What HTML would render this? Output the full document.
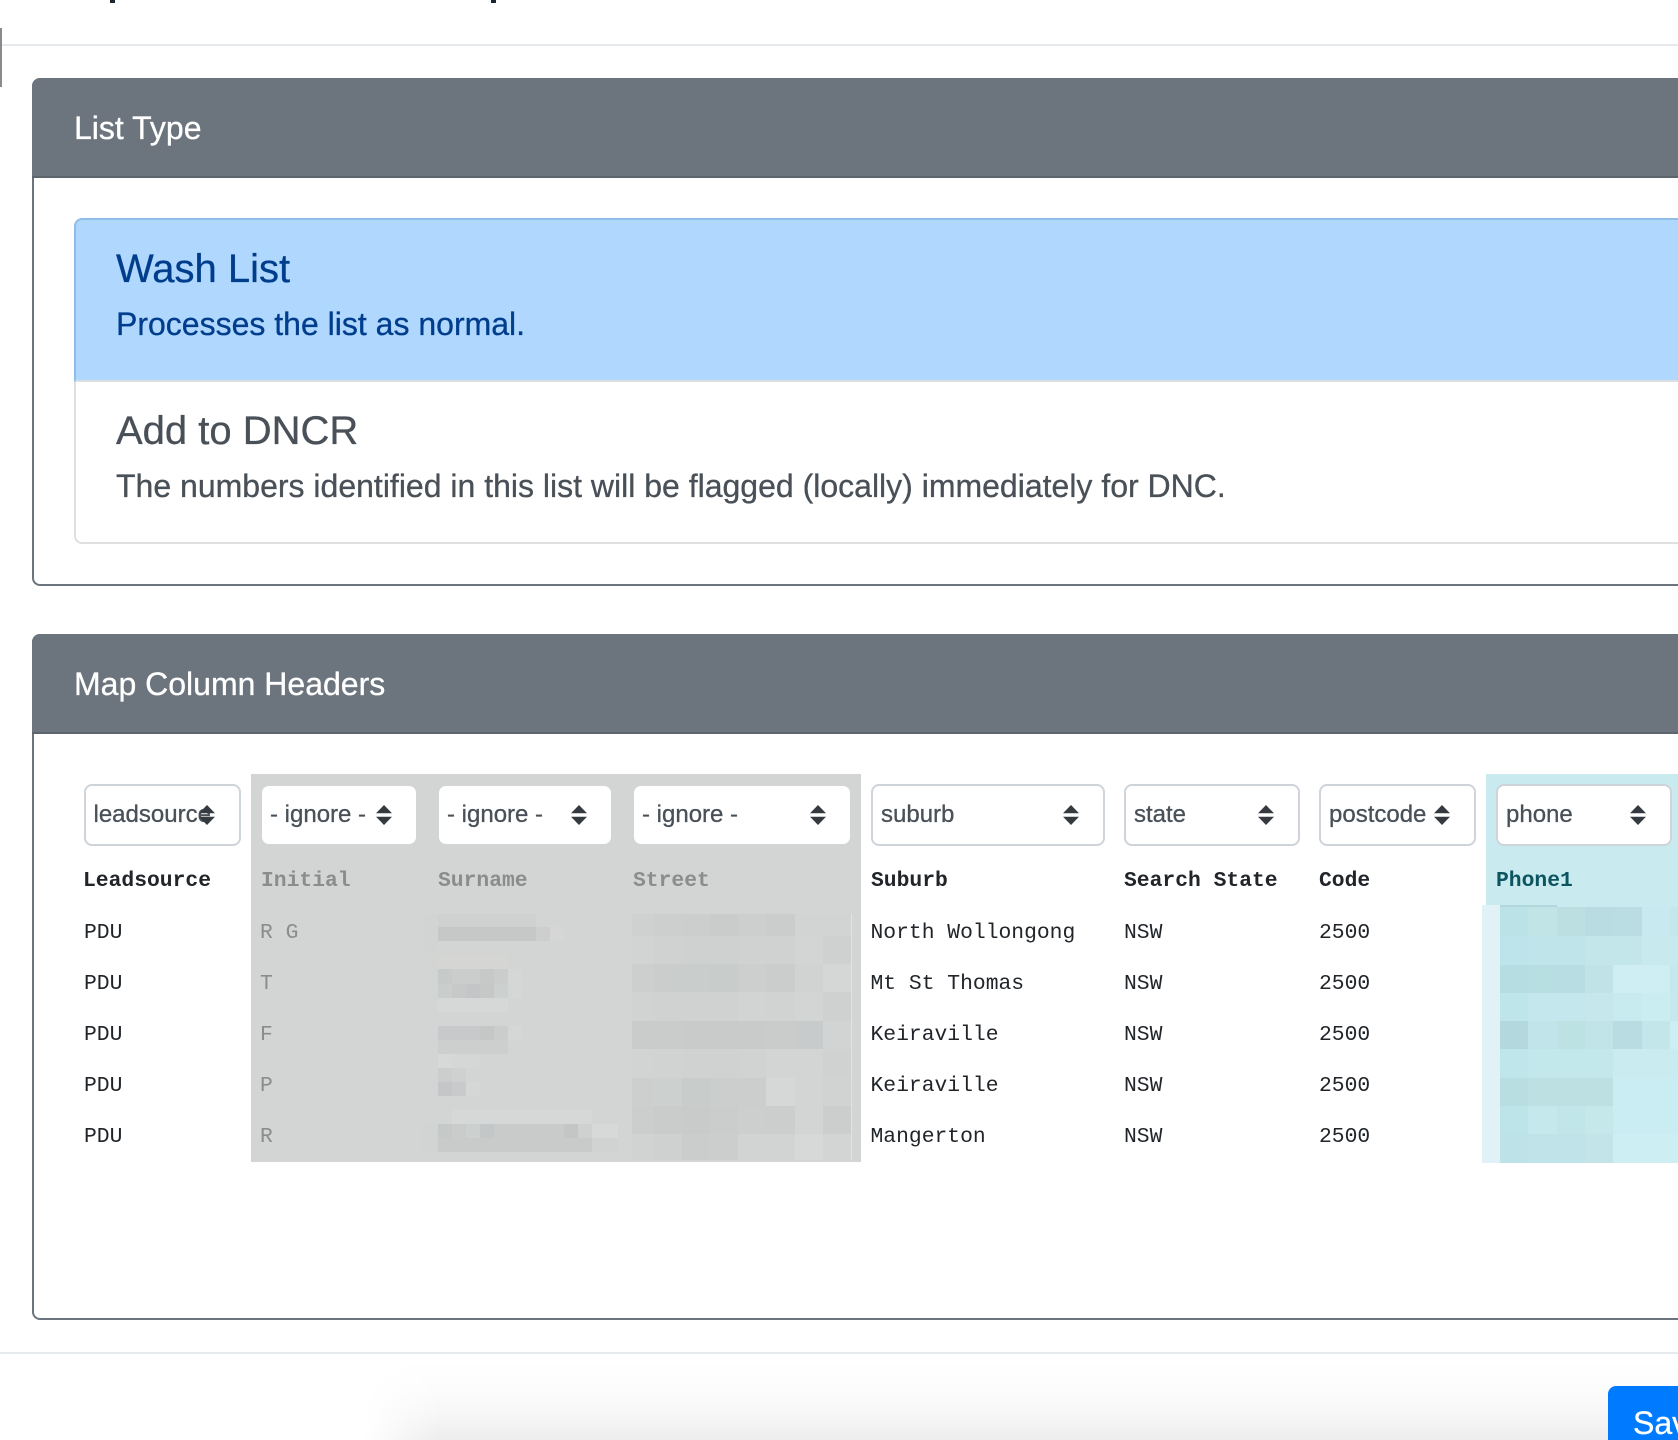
<!DOCTYPE html>
<html><head><meta charset="utf-8"><title>Map Column Headers</title>
<style>
html,body{margin:0;padding:0;width:1678px;height:1440px;overflow:hidden;background:#fff}
#p{position:relative;width:1678px;height:1440px;overflow:hidden;background:#fff}
#p div,#p span,#p svg{position:absolute}
.t{line-height:0;white-space:pre;font-family:"Liberation Sans",sans-serif;-webkit-text-stroke:.3px currentColor}
.card{left:32px;width:1646px;box-sizing:border-box;border:2px solid #6c757d;border-right:0;border-radius:8px 0 0 8px;background:#fff}
.head{background:#6c757d;left:32px;width:1646px;border-radius:8px 0 0 0;border-bottom:2px solid #5d656c;box-sizing:border-box}
.h{font-size:32px;color:#fff;left:74px}
.sel{box-sizing:border-box;background:#fff;border:2px solid #ced4da;border-radius:8px;top:784px;height:62px}
.sel.g{border:0;top:786px;height:58px;border-radius:7px}
.st{font-size:24px;color:#495057;top:815.4px}
.m{font-family:"Liberation Mono",monospace;font-size:21.33px;color:#212529;-webkit-text-stroke:0}
.b{font-weight:bold}
.gr{color:#8b8c8d}
.ar{top:805px;width:16px;height:20px}
</style></head><body><div id="p">

<div style="left:110px;top:0;width:5px;height:3px;background:#1c2530"></div>
<div style="left:491px;top:0;width:5px;height:3px;background:#1c2530"></div>
<div style="left:0;top:44px;width:1678px;height:2px;background:#e7eaed"></div>
<div style="left:0;top:28px;width:2px;height:59px;background:#8a8a8a"></div>

<!-- Card 1 -->
<div class="card" style="top:78px;height:508px"></div>
<div class="head" style="top:78px;height:100px"></div>
<div class="t h" style="top:127.9px">List Type</div>
<div style="left:74px;top:218px;width:1604px;height:164px;box-sizing:border-box;background:#b0d8fe;border:2px solid #8fbde9;border-right:0;border-bottom:2px solid #dcdfe2;border-radius:8px 0 0 0"></div>
<div style="left:74px;top:382px;width:1604px;height:162px;box-sizing:border-box;background:#fff;border:2px solid #dfdfdf;border-top:0;border-right:0;border-radius:0 0 0 8px"></div>
<div class="t" style="left:116px;top:268.8px;font-size:40px;color:#003d8c">Wash List</div>
<div class="t" style="left:116px;top:323.9px;font-size:32px;color:#003d8c">Processes the list as normal.</div>
<div class="t" style="left:116px;top:431.1px;font-size:40px;color:#495057">Add to DNCR</div>
<div class="t" style="left:116px;top:485.9px;font-size:32px;color:#495057">The numbers identified in this list will be flagged (locally) immediately for DNC.</div>

<!-- Card 2 -->
<div class="card" style="top:634px;height:686px"></div>
<div class="head" style="top:634px;height:100px"></div>
<div class="t h" style="top:683.9px">Map Column Headers</div>

<div style="left:251px;top:774px;width:610px;height:388px;background:#d3d4d4"></div>
<div style="left:1486px;top:774px;width:192px;height:131px;background:#c9ebef"></div>

<svg style="left:0;top:0" width="1678" height="1440" viewBox="0 0 1678 1440">
<!-- surname -->
<rect x="424" y="914" width="14" height="38" fill="#d2d3d2"/>
<rect x="438" y="914" width="98" height="13" fill="#cfd0d0"/>
<rect x="438" y="927" width="98" height="14" fill="#c6c8c8"/>
<rect x="536" y="927" width="14" height="14" fill="#cdcece"/>
<rect x="550" y="927" width="14" height="14" fill="#d6d6d6"/>
<rect x="438" y="954" width="70" height="15" fill="#d5d5d3"/>
<rect x="438" y="969" width="14" height="15" fill="#c6cac9"/>
<rect x="452" y="969" width="28" height="15" fill="#cacdcc"/>
<rect x="480" y="969" width="14" height="15" fill="#c6c9c8"/>
<rect x="494" y="969" width="14" height="15" fill="#cbcccc"/>
<rect x="508" y="969" width="14" height="29" fill="#d5d6d6"/>
<rect x="438" y="984" width="14" height="14" fill="#c9cdcc"/>
<rect x="452" y="984" width="14" height="14" fill="#c7c8c8"/>
<rect x="466" y="984" width="14" height="14" fill="#c4c5c6"/>
<rect x="480" y="984" width="14" height="14" fill="#c6c7c7"/>
<rect x="494" y="984" width="14" height="14" fill="#ccd0ce"/>
<rect x="438" y="998" width="70" height="14" fill="#d6d7d7"/>
<rect x="438" y="1026" width="42" height="14" fill="#c8c9ca"/>
<rect x="480" y="1026" width="14" height="14" fill="#c5c6c6"/>
<rect x="494" y="1026" width="14" height="14" fill="#cbcccc"/>
<rect x="508" y="1026" width="14" height="14" fill="#d5d6d6"/>
<rect x="438" y="1040" width="70" height="14" fill="#cdcece"/>
<rect x="438" y="1054" width="14" height="14" fill="#d7d8d8"/>
<rect x="452" y="1054" width="28" height="14" fill="#d5d6d6"/>
<rect x="438" y="1068" width="14" height="14" fill="#cccdcd"/>
<rect x="452" y="1068" width="14" height="14" fill="#cfd1d0"/>
<rect x="438" y="1082" width="14" height="14" fill="#c5c6c7"/>
<rect x="452" y="1082" width="14" height="14" fill="#c9cacc"/>
<rect x="466" y="1082" width="14" height="14" fill="#d5d6d6"/>
<rect x="452" y="1110" width="140" height="14" fill="#d6d7d7"/>
<rect x="438" y="1124" width="14" height="14" fill="#c5c9c8"/>
<rect x="452" y="1124" width="14" height="14" fill="#c9cccb"/>
<rect x="466" y="1124" width="14" height="14" fill="#ccd0ce"/>
<rect x="480" y="1124" width="14" height="14" fill="#c4c7c8"/>
<rect x="494" y="1124" width="70" height="14" fill="#c9caca"/>
<rect x="564" y="1124" width="14" height="14" fill="#c4c5c5"/>
<rect x="578" y="1124" width="14" height="14" fill="#cfd1d0"/>
<rect x="592" y="1124" width="26" height="14" fill="#d7d8d8"/>
<rect x="438" y="1138" width="154" height="14" fill="#c9cbcb"/>
<rect x="592" y="1138" width="26" height="14" fill="#d1d2d2"/>
<rect x="422" y="1124" width="16" height="28" fill="#d2d3d3"/>
<!-- street -->
<g>
<rect x="632" y="914" width="22" height="22" fill="#cfd0d0"/><rect x="654" y="914" width="28" height="22" fill="#cdcece"/><rect x="682" y="914" width="28" height="22" fill="#cccdcd"/><rect x="710" y="914" width="28" height="22" fill="#cacbcb"/><rect x="738" y="914" width="28" height="22" fill="#cdcece"/><rect x="766" y="914" width="29" height="22" fill="#cbcccc"/><rect x="795" y="914" width="56" height="22" fill="#d2d3d3"/>
<rect x="632" y="936" width="22" height="28" fill="#d2d3d3"/><rect x="654" y="936" width="28" height="28" fill="#d0d1d1"/><rect x="682" y="936" width="28" height="28" fill="#cfd0d0"/><rect x="710" y="936" width="28" height="28" fill="#ced1cf"/><rect x="738" y="936" width="57" height="28" fill="#d0d1d1"/><rect x="795" y="936" width="28" height="28" fill="#d3d4d4"/><rect x="823" y="936" width="28" height="28" fill="#cfd0d0"/>
<rect x="632" y="964" width="22" height="28" fill="#cdcece"/><rect x="654" y="964" width="28" height="28" fill="#cbcccc"/><rect x="682" y="964" width="28" height="28" fill="#c9cdcb"/><rect x="710" y="964" width="28" height="28" fill="#c8cccb"/><rect x="738" y="964" width="28" height="28" fill="#cdcece"/><rect x="766" y="964" width="29" height="28" fill="#cbcccc"/><rect x="795" y="964" width="28" height="28" fill="#d1d2d2"/><rect x="823" y="964" width="28" height="28" fill="#d5d6d6"/>
<rect x="632" y="992" width="22" height="29" fill="#d1d2d2"/><rect x="654" y="992" width="84" height="29" fill="#d0d1d1"/><rect x="738" y="992" width="28" height="29" fill="#d2d3d3"/><rect x="766" y="992" width="29" height="29" fill="#d1d2d2"/><rect x="795" y="992" width="28" height="29" fill="#d3d4d4"/><rect x="823" y="992" width="28" height="29" fill="#cfd0d0"/>
<rect x="632" y="1021" width="50" height="28" fill="#cacbcb"/><rect x="682" y="1021" width="28" height="28" fill="#c9caca"/><rect x="710" y="1021" width="56" height="28" fill="#c8cbca"/><rect x="766" y="1021" width="29" height="28" fill="#cacbcb"/><rect x="795" y="1021" width="28" height="28" fill="#c7cbcb"/><rect x="823" y="1021" width="28" height="28" fill="#d2d3d3"/>
<rect x="632" y="1049" width="22" height="29" fill="#d2d3d3"/><rect x="654" y="1049" width="28" height="29" fill="#d1d2d2"/><rect x="682" y="1049" width="56" height="29" fill="#d0d1d1"/><rect x="738" y="1049" width="28" height="29" fill="#d1d2d2"/><rect x="766" y="1049" width="57" height="29" fill="#d3d4d4"/><rect x="823" y="1049" width="28" height="29" fill="#d0d1d1"/>
<rect x="632" y="1078" width="22" height="28" fill="#cdcfce"/><rect x="654" y="1078" width="28" height="28" fill="#ccd0ce"/><rect x="682" y="1078" width="28" height="28" fill="#c8ccca"/><rect x="710" y="1078" width="56" height="28" fill="#cccdcd"/><rect x="766" y="1078" width="29" height="28" fill="#d6d7d7"/><rect x="795" y="1078" width="28" height="28" fill="#d3d4d4"/><rect x="823" y="1078" width="28" height="28" fill="#d1d2d2"/>
<rect x="632" y="1106" width="22" height="28" fill="#cccdcd"/><rect x="654" y="1106" width="28" height="28" fill="#cacbcb"/><rect x="682" y="1106" width="28" height="28" fill="#c9caca"/><rect x="710" y="1106" width="28" height="28" fill="#cbcccc"/><rect x="738" y="1106" width="28" height="28" fill="#cdcece"/><rect x="766" y="1106" width="29" height="28" fill="#cccdcd"/><rect x="795" y="1106" width="28" height="28" fill="#d3d4d4"/><rect x="823" y="1106" width="28" height="28" fill="#cccdcd"/>
<rect x="632" y="1134" width="22" height="26" fill="#d1d2d2"/><rect x="654" y="1134" width="28" height="26" fill="#cfd0d0"/><rect x="682" y="1134" width="28" height="26" fill="#cbcccc"/><rect x="710" y="1134" width="28" height="26" fill="#cccdcd"/><rect x="738" y="1134" width="57" height="26" fill="#d2d3d3"/><rect x="795" y="1134" width="28" height="26" fill="#d7d8d8"/><rect x="823" y="1134" width="28" height="26" fill="#d3d4d4"/>
<rect x="851" y="914" width="1" height="246" fill="#e2e2e2"/>
</g>
<!-- phone -->
<g>
<rect x="1482" y="905" width="18" height="258" fill="#e1f2f6"/>
<rect x="1500" y="905" width="57" height="2" fill="#b0d8dc"/><rect x="1557" y="905" width="121" height="2" fill="#c9ebef"/>
<rect x="1500" y="907" width="28" height="29" fill="#bbe2e7"/><rect x="1528" y="907" width="29" height="29" fill="#c1e4e7"/><rect x="1557" y="907" width="28" height="29" fill="#bcdfe2"/><rect x="1585" y="907" width="28" height="29" fill="#b8dce1"/><rect x="1613" y="907" width="29" height="29" fill="#b9dde2"/><rect x="1642" y="907" width="28" height="29" fill="#c7e9ef"/><rect x="1670" y="907" width="8" height="29" fill="#c4e7eb"/>
<rect x="1500" y="936" width="28" height="29" fill="#bde4ea"/><rect x="1528" y="936" width="57" height="29" fill="#bfe5ea"/><rect x="1585" y="936" width="57" height="29" fill="#c2e6ea"/><rect x="1642" y="936" width="36" height="29" fill="#c8e9ee"/>
<rect x="1500" y="965" width="28" height="28" fill="#b6dde1"/><rect x="1528" y="965" width="29" height="28" fill="#b7dee0"/><rect x="1557" y="965" width="28" height="28" fill="#b8dde2"/><rect x="1585" y="965" width="28" height="28" fill="#c0e3e8"/><rect x="1613" y="965" width="57" height="28" fill="#ceeef3"/><rect x="1670" y="965" width="8" height="28" fill="#c5e8ed"/>
<rect x="1500" y="993" width="28" height="28" fill="#bee5ea"/><rect x="1528" y="993" width="57" height="28" fill="#c3e7ec"/><rect x="1585" y="993" width="28" height="28" fill="#c6e8ed"/><rect x="1613" y="993" width="29" height="28" fill="#c8ebef"/><rect x="1642" y="993" width="28" height="28" fill="#caedf1"/><rect x="1670" y="993" width="8" height="28" fill="#c7e9ee"/>
<rect x="1500" y="1021" width="28" height="28" fill="#b3d9de"/><rect x="1528" y="1021" width="29" height="28" fill="#c0e4e9"/><rect x="1557" y="1021" width="28" height="28" fill="#bde2e4"/><rect x="1585" y="1021" width="28" height="28" fill="#c1e4e9"/><rect x="1613" y="1021" width="29" height="28" fill="#b8dce1"/><rect x="1642" y="1021" width="28" height="28" fill="#c3e6eb"/><rect x="1670" y="1021" width="8" height="28" fill="#cdeef3"/>
<rect x="1500" y="1049" width="28" height="29" fill="#bfe6eb"/><rect x="1528" y="1049" width="85" height="29" fill="#c3e8ec"/><rect x="1613" y="1049" width="65" height="29" fill="#caecf0"/>
<rect x="1500" y="1078" width="28" height="28" fill="#b8dee2"/><rect x="1528" y="1078" width="85" height="28" fill="#bde0e3"/><rect x="1613" y="1078" width="65" height="28" fill="#c9edf2"/>
<rect x="1500" y="1106" width="28" height="28" fill="#bde4e9"/><rect x="1528" y="1106" width="29" height="28" fill="#c4e8eb"/><rect x="1557" y="1106" width="28" height="28" fill="#c1e6ea"/><rect x="1585" y="1106" width="28" height="28" fill="#c5e8eb"/><rect x="1613" y="1106" width="65" height="28" fill="#c9edf2"/>
<rect x="1500" y="1134" width="28" height="29" fill="#bde2e7"/><rect x="1528" y="1134" width="57" height="29" fill="#bfe3e8"/><rect x="1585" y="1134" width="28" height="29" fill="#c3e5e9"/><rect x="1613" y="1134" width="65" height="29" fill="#cdeef2"/>
</g>
</svg>

<!-- selects -->
<div class="sel" style="left:84px;width:157px"></div>
<div class="sel g" style="left:262px;width:154px"></div>
<div class="sel g" style="left:439px;width:172px"></div>
<div class="sel g" style="left:634px;width:216px"></div>
<div class="sel" style="left:871px;width:234px"></div>
<div class="sel" style="left:1124px;width:176px"></div>
<div class="sel" style="left:1319px;width:157px"></div>
<div class="sel" style="left:1496px;width:176px"></div>

<div class="t st" style="left:93.5px">leadsource</div>
<div class="t st" style="left:270px">- ignore -</div>
<div class="t st" style="left:447px">- ignore -</div>
<div class="t st" style="left:642px">- ignore -</div>
<div class="t st" style="left:881px">suburb</div>
<div class="t st" style="left:1134px">state</div>
<div class="t st" style="left:1329px">postcode</div>
<div class="t st" style="left:1506px">phone</div>

<svg class="ar" style="left:199px" viewBox="0 0 16 20"><path d="M8 0L16 8.3H0ZM0 11.7H16L8 20Z" fill="#343a40"/></svg>
<svg class="ar" style="left:376px" viewBox="0 0 16 20"><path d="M8 0L16 8.3H0ZM0 11.7H16L8 20Z" fill="#343a40"/></svg>
<svg class="ar" style="left:571px" viewBox="0 0 16 20"><path d="M8 0L16 8.3H0ZM0 11.7H16L8 20Z" fill="#343a40"/></svg>
<svg class="ar" style="left:810px" viewBox="0 0 16 20"><path d="M8 0L16 8.3H0ZM0 11.7H16L8 20Z" fill="#343a40"/></svg>
<svg class="ar" style="left:1063px" viewBox="0 0 16 20"><path d="M8 0L16 8.3H0ZM0 11.7H16L8 20Z" fill="#343a40"/></svg>
<svg class="ar" style="left:1258px" viewBox="0 0 16 20"><path d="M8 0L16 8.3H0ZM0 11.7H16L8 20Z" fill="#343a40"/></svg>
<svg class="ar" style="left:1434px" viewBox="0 0 16 20"><path d="M8 0L16 8.3H0ZM0 11.7H16L8 20Z" fill="#343a40"/></svg>
<svg class="ar" style="left:1630px" viewBox="0 0 16 20"><path d="M8 0L16 8.3H0ZM0 11.7H16L8 20Z" fill="#343a40"/></svg>

<!-- table text -->
<div class="t m b" style="left:83px;top:881.3px">Leadsource</div>
<div class="t m b gr" style="left:261px;top:881.3px">Initial</div>
<div class="t m b gr" style="left:438px;top:881.3px">Surname</div>
<div class="t m b gr" style="left:633px;top:881.3px">Street</div>
<div class="t m b" style="left:871px;top:881.3px">Suburb</div>
<div class="t m b" style="left:1124px;top:881.3px">Search State</div>
<div class="t m b" style="left:1319px;top:881.3px">Code</div>
<div class="t m b" style="left:1496px;top:881.3px;color:#0c5460">Phone1</div>

<div class="t m" style="left:84px;top:933.3px">PDU</div>
<div class="t m" style="left:84px;top:984.3px">PDU</div>
<div class="t m" style="left:84px;top:1035.3px">PDU</div>
<div class="t m" style="left:84px;top:1086.3px">PDU</div>
<div class="t m" style="left:84px;top:1137.3px">PDU</div>

<div class="t m gr" style="left:260px;top:933.3px">R G</div>
<div class="t m gr" style="left:260px;top:984.3px">T</div>
<div class="t m gr" style="left:260px;top:1035.3px">F</div>
<div class="t m gr" style="left:260px;top:1086.3px">P</div>
<div class="t m gr" style="left:260px;top:1137.3px">R</div>

<div class="t m" style="left:870.5px;top:933.3px">North Wollongong</div>
<div class="t m" style="left:870.5px;top:984.3px">Mt St Thomas</div>
<div class="t m" style="left:870.5px;top:1035.3px">Keiraville</div>
<div class="t m" style="left:870.5px;top:1086.3px">Keiraville</div>
<div class="t m" style="left:870.5px;top:1137.3px">Mangerton</div>

<div class="t m" style="left:1124px;top:933.3px">NSW</div>
<div class="t m" style="left:1124px;top:984.3px">NSW</div>
<div class="t m" style="left:1124px;top:1035.3px">NSW</div>
<div class="t m" style="left:1124px;top:1086.3px">NSW</div>
<div class="t m" style="left:1124px;top:1137.3px">NSW</div>

<div class="t m" style="left:1319px;top:933.3px">2500</div>
<div class="t m" style="left:1319px;top:984.3px">2500</div>
<div class="t m" style="left:1319px;top:1035.3px">2500</div>
<div class="t m" style="left:1319px;top:1086.3px">2500</div>
<div class="t m" style="left:1319px;top:1137.3px">2500</div>

<!-- footer -->
<div style="left:0;top:1352px;width:1678px;height:2px;background:#e7eaed"></div>
<div style="left:364px;top:1362px;width:1314px;height:78px;background:linear-gradient(to bottom,rgba(0,0,0,0),rgba(0,0,0,.012) 35%,rgba(0,0,0,.03) 65%,rgba(0,0,0,.07));-webkit-mask-image:linear-gradient(to right,transparent,#000 76px);mask-image:linear-gradient(to right,transparent,#000 76px)"></div>
<div style="left:1608px;top:1386px;width:70px;height:54px;background:#007bff;border-radius:8px 0 0 0"></div>
<div class="t" style="left:1633px;top:1422.9px;font-size:32px;color:#fff">Save</div>

</div></body></html>
